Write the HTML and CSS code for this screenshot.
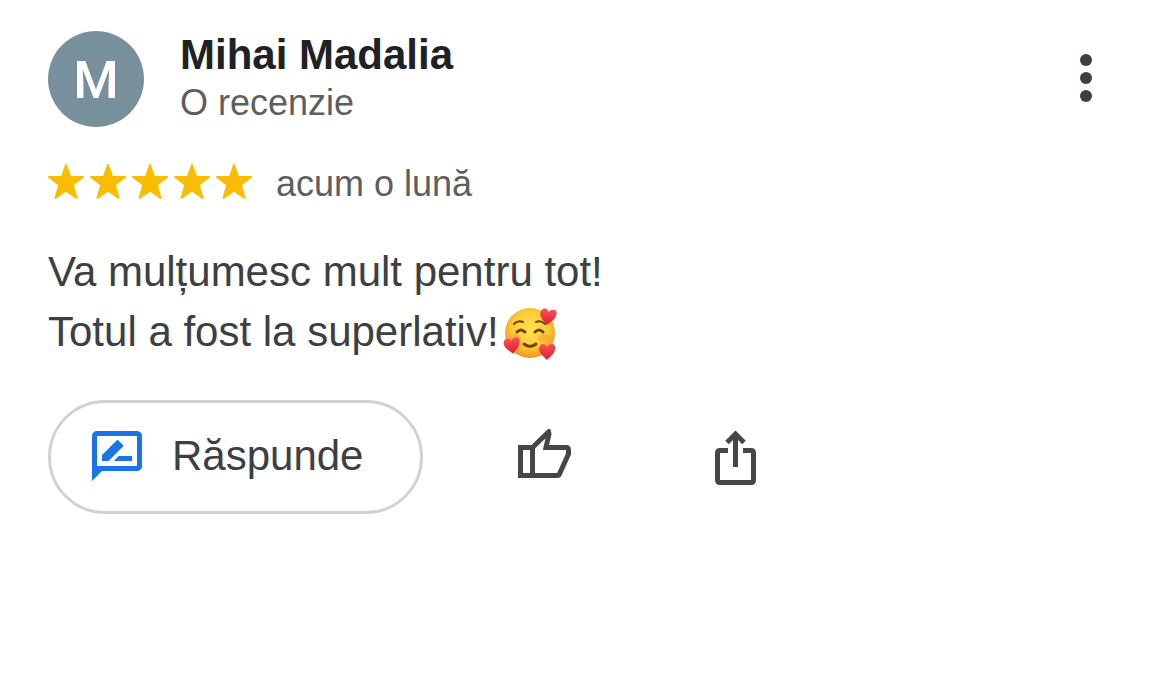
FILE: index.html
```html
<!DOCTYPE html>
<html lang="ro">
<head>
    <meta charset="UTF-8">
    <meta name="viewport" content="width=device-width, initial-scale=1.0">
    <title>Recenzie - Mihai Madalia</title>
    <link rel="stylesheet" href="styles.css">
</head>
<body>
    <article class="review">
        <header class="review-header">
            <div class="avatar">M</div>
            <div class="author">
                <h1 class="author-name">Mihai Madalia</h1>
                <p class="author-info">O recenzie</p>
            </div>
            <button type="button" class="icon-button menu-button" aria-label="Mai multe">
                <svg width="12" height="50" viewBox="0 0 12 50" fill="currentColor">
                    <circle cx="6" cy="6" r="6"/>
                    <circle cx="6" cy="24" r="6"/>
                    <circle cx="6" cy="42" r="6"/>
                </svg>
            </button>
        </header>

        <div class="rating">
            <div class="stars" role="img" aria-label="5 stele">
                <svg class="star" viewBox="0 0 36 36"><use href="#star"/></svg>
                <svg class="star" viewBox="0 0 36 36"><use href="#star"/></svg>
                <svg class="star" viewBox="0 0 36 36"><use href="#star"/></svg>
                <svg class="star" viewBox="0 0 36 36"><use href="#star"/></svg>
                <svg class="star" viewBox="0 0 36 36"><use href="#star"/></svg>
            </div>
            <span class="date">acum o lună</span>
        </div>

        <p class="review-text">
            Va mulțumesc mult pentru tot!<br>
            Totul a fost la superlativ!<svg class="emoji" viewBox="0 2 54 54" role="img" aria-label="față zâmbitoare cu inimi">
                <defs>
                    <radialGradient id="face" cx="50%" cy="42%" r="56%">
                        <stop offset="0" stop-color="#ffe34f"/>
                        <stop offset="0.65" stop-color="#fdcb36"/>
                        <stop offset="1" stop-color="#ee9a20"/>
                    </radialGradient>
                    <linearGradient id="red" x1="0" y1="0" x2="0" y2="1">
                        <stop offset="0" stop-color="#fb5058"/>
                        <stop offset="1" stop-color="#dc1c30"/>
                    </linearGradient>
                    <path id="heart" d="M8 16C4 12 0 9 0 5C0 2 2 0 4 0C6 0 7 1 8 3C9 1 11 0 13 0C15 0 17 2 16 5C16 9 11 13 8 16Z"/>
                </defs>
                <circle cx="27" cy="27" r="25" fill="url(#face)"/>
                <ellipse cx="12" cy="32" rx="6" ry="4" fill="#f58a35" opacity="0.4"/>
                <ellipse cx="41" cy="32" rx="6" ry="4" fill="#f58a35" opacity="0.4"/>
                <g fill="none" stroke="#70420f" stroke-linecap="round">
                    <path d="M11 18Q15 14 20 16M33 16Q38 14 42 18" stroke-width="2"/>
                    <path d="M14 26Q18 22 22 26M32 26Q36 22 40 26" stroke-width="3"/>
                    <path d="M21 38Q27 43 33 38" stroke-width="3"/>
                </g>
                <g fill="url(#red)">
                    <use href="#heart" transform="translate(38 2) rotate(8)"/>
                    <use href="#heart" transform="translate(0 33) rotate(-8)"/>
                    <use href="#heart" transform="translate(36 38)"/>
                </g>
            </svg>
        </p>

        <footer class="actions">
            <button type="button" class="reply-button">
                <svg width="50" height="50" viewBox="2 2 20 20" fill="#1a73e8">
                    <path d="M20 2H4C2.900 2 2 2.900 2 4V22L6 18H20C21.100 18 22 17.100 22 16V4C22 2.900 21.100 2 20 2ZM20 16H4V4H20Z"/>
                    <path d="M6 14V11.600L11.800 5.800Q12.200 5.400 12.600 5.800L14.300 7.500Q14.700 7.900 14.300 8.300L8.600 14ZM10.700 14L12.700 12H18V14Z"/>
                </svg>
                Răspunde
            </button>
            <button type="button" class="icon-button like-button" aria-label="Apreciază">
                <svg width="54" height="50" viewBox="0 0 54 50" fill="none" stroke="currentColor" stroke-width="5">
                    <path d="M2.500 18.500H14.500L30.500 3L31 5L28 18.500H48Q50.500 18.500 50.500 21V25L41.500 45Q41 46.500 39 46.500H2.500ZM14.500 18.500V46.500"/>
                </svg>
            </button>
            <button type="button" class="icon-button share-button" aria-label="Distribuie">
                <svg width="42" height="56" viewBox="0 0 42 56" fill="none" stroke="currentColor" stroke-width="5">
                    <path d="M13 20.500H5Q2.500 20.500 2.500 23V50Q2.500 52.500 5 52.500H36Q38.500 52.500 38.500 50V23Q38.500 20.500 36 20.500H28"/>
                    <path d="M20.500 37V4M12 12.500L20.500 4L29 12.500"/>
                </svg>
            </button>
        </footer>
    </article>

    <svg class="symbols" aria-hidden="true">
        <symbol id="star" viewBox="0 0 36 36">
            <path d="M18 1L22.200 13H35L24.800 20.800L28.500 34L18 26.500L7.500 34L11.200 20.800L1 13H13.800Z" fill="#fbbc04" stroke="#fbbc04" stroke-width="2" stroke-linejoin="round"/>
        </symbol>
    </svg>
</body>
</html>
```
FILE: styles.css
```css
body {
    margin: 0;
    background-color: #fff;
    color: #3c4043;
    font-family: "Liberation Sans", Arial, sans-serif;
}

.review {
    padding: 31px 48px;
}

.review-header {
    display: flex;
    align-items: center;
}

.avatar {
    display: flex;
    align-items: center;
    justify-content: center;
    box-sizing: border-box;
    width: 96px;
    height: 96px;
    padding-top: 4px;
    border-radius: 50%;
    background-color: #78909c;
    color: #fff;
    font-family: Roboto, sans-serif;
    font-size: 52px;
    font-weight: 500;
    line-height: 60px;
}

.author {
    flex: 1;
    margin-left: 36px;
}

.author-name,
.author-info {
    margin: 0;
    line-height: 48px;
}

.author-name {
    color: #202124;
    font-size: 42px;
    font-weight: bold;
}

.author-info,
.date {
    color: #5e5e5e;
    font-size: 36px;
}

.icon-button {
    display: flex;
    padding: 0;
    border: none;
    background: none;
    color: #444746;
    cursor: pointer;
}

.menu-button {
    margin-right: 30px;
    color: #3c4043;
}

.rating {
    display: flex;
    align-items: center;
    margin-top: 35px;
}

.stars {
    display: flex;
    gap: 6px;
    padding-bottom: 4px;
}

.star {
    width: 36px;
    height: 36px;
}

.date {
    margin-left: 24px;
    line-height: 44px;
}

.review-text {
    margin: 36px 0 0;
    font-size: 42px;
    line-height: 60px;
}

.emoji {
    width: 54px;
    height: 54px;
    margin-left: 4px;
    vertical-align: middle;
}

.actions {
    display: flex;
    align-items: center;
    margin-top: 38px;
}

.reply-button {
    display: flex;
    align-items: center;
    gap: 30px;
    height: 114px;
    padding: 0 57px 3px 41px;
    border: 3px solid #d2d2d2;
    border-radius: 57px;
    background-color: #fff;
    color: #3c4043;
    font-family: inherit;
    font-size: 42px;
    cursor: pointer;
}

.like-button {
    margin-left: 95px;
    padding-bottom: 6px;
}

.share-button {
    margin-left: 143px;
    padding-top: 2px;
}

.symbols {
    display: none;
}
```
